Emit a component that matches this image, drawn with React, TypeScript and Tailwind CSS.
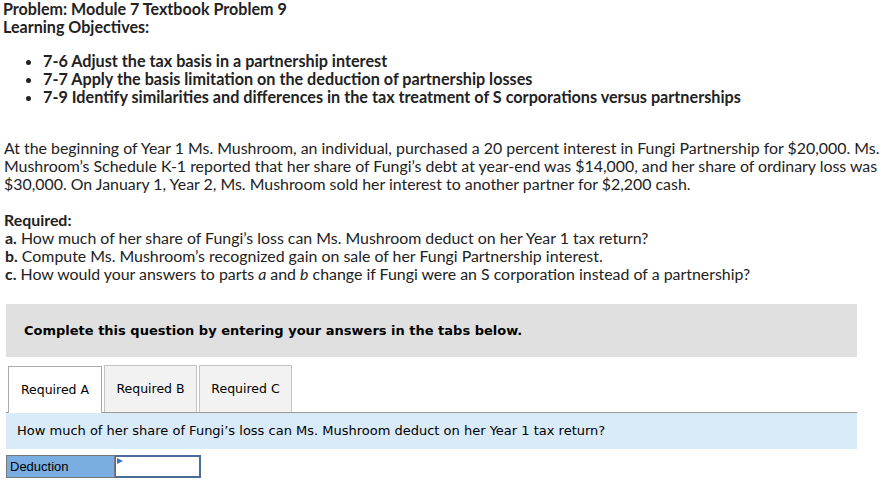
export default function App() {
  const body = { fontFamily: 'Lato, "Open Sans", sans-serif' }
  const verd = { fontFamily: '"DejaVu Sans", Verdana, sans-serif' }
  return (
    <div className="min-h-screen bg-white text-[#222] pl-[4px]">
      <div style={body} className="text-[15.9px] leading-[18px]">
        <div className="font-bold text-[16.1px] -ml-[1px]">Problem: Module 7 Textbook Problem 9</div>
        <div className="font-bold text-[16.1px] -ml-[1px]">Learning Objectives:</div>
        <ul className="mt-[16px] pl-[25px] font-bold text-[16.2px] list-disc list-outside ml-[14px]">
          <li>7-6 Adjust the tax basis in a partnership interest</li>
          <li>7-7 Apply the basis limitation on the deduction of partnership losses</li>
          <li>7-9 Identify similarities and differences in the tax treatment of S corporations versus partnerships</li>
        </ul>

        <div className="mt-[33px] whitespace-nowrap">
          <div>At the beginning of Year 1 Ms. Mushroom, an individual, purchased a 20 percent interest in Fungi Partnership for $20,000. Ms.</div>
          <div>Mushroom’s Schedule K-1 reported that her share of Fungi’s debt at year-end was $14,000, and her share of ordinary loss was</div>
          <div>$30,000. On January 1, Year 2, Ms. Mushroom sold her interest to another partner for $2,200 cash.</div>
        </div>

        <div className="mt-[18px]">
          <div className="font-bold">Required:</div>
          <div className="pl-[1px]"><b>a.</b> How much of her share of Fungi’s loss can Ms. Mushroom deduct on her Year 1 tax return?</div>
          <div className="pl-[1px]"><b>b.</b> Compute Ms. Mushroom’s recognized gain on sale of her Fungi Partnership interest.</div>
          <div className="pl-[1px]"><b>c.</b> How would your answers to parts <i>a</i> and <i>b</i> change if Fungi were an S corporation instead of a partnership?</div>
        </div>
      </div>

      <div className="ml-[2px] w-[851px]" style={verd}>
        <div className="mt-[21px] bg-[#e0e0e0] h-[53px] flex items-center pl-[18px] text-[13px] font-bold text-black">
          Complete this question by entering your answers in the tabs below.
        </div>

        <div className="mt-[8px] flex items-end border-b border-[#999] text-[12.5px] text-black">
          <div className="ml-[2px] w-[94px] h-[47px] -mb-px bg-white border border-b-0 border-[#aaa] flex items-center justify-center">Required A</div>
          <div className="ml-[2px] w-[93px] h-[47px] bg-[#f2f2f2] border border-b-0 border-[#c4c4c4] flex items-center justify-center">Required B</div>
          <div className="ml-[2px] w-[93px] h-[47px] bg-[#f2f2f2] border border-b-0 border-[#c4c4c4] flex items-center justify-center">Required C</div>
        </div>

        <div className="bg-[#d9ebf9] h-[36px] flex items-center pl-[11px] text-[13px] text-black">
          How much of her share of Fungi’s loss can Ms. Mushroom deduct on her Year 1 tax return?
        </div>

        <div className="mt-[6px] flex h-[23px]" style={{ fontFamily: '"Liberation Sans", Arial, sans-serif' }}>
          <div className="w-[109px] bg-[#7aaee3] border border-[#777] flex items-center pl-[3px] text-[13px] text-black">Deduction</div>
          <div className="relative w-[86px] bg-white border-2 border-l border-[#4a6d9c]">
            <svg className="absolute left-[1px] top-[1px]" width="6" height="7" viewBox="0 0 6 7">
              <polygon points="0,0 6,3 0,6" fill="#3b73c2" />
            </svg>
          </div>
        </div>
      </div>
    </div>
  )
}
